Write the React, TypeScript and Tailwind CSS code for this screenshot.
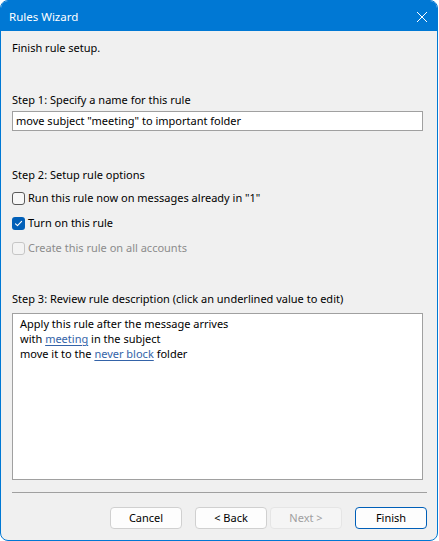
import React from "react";

const font = { fontFamily: '"Noto Sans", "Open Sans", sans-serif' };

function Check({ state }: { state: "off" | "on" | "disabled" }) {
  if (state === "on") {
    return (
      <span className="w-[13px] h-[13px] rounded-[3px] bg-[#005fb8] flex items-center justify-center shrink-0">
        <svg width="9" height="9" viewBox="0 0 9 9" fill="none">
          <path d="M1.5 4.8 L3.5 6.7 L7.6 2.3" stroke="white" strokeWidth="1.1" strokeLinecap="round" strokeLinejoin="round" />
        </svg>
      </span>
    );
  }
  return (
    <span
      className={
        "w-[13px] h-[13px] rounded-[3px] border shrink-0 " +
        (state === "off" ? "border-[#5a5a5a] bg-[#f7f7f7]" : "border-[#c6c6c6] bg-[#f3f3f3]")
      }
    />
  );
}

export default function App() {
  return (
    <div className="w-[439px] h-[541px] bg-white" style={font}>
      <div className="w-[438px] h-[541px] rounded-[8px] border border-[#0078d4] overflow-hidden bg-[#f0f0f0] flex flex-col text-[11px] text-black">
        <div className="h-[30px] bg-[#0078d4] flex items-center justify-between pl-[8px] pr-[9px] shrink-0">
          <span className="text-white text-[11.5px] leading-[16px] mt-[1px]">Rules Wizard</span>
          <svg width="12" height="12" viewBox="0 0 12 12" className="mt-[1px]">
            <path d="M1 1 L11 11 M11 1 L1 11" stroke="white" strokeWidth="1" />
          </svg>
        </div>
        <div className="flex flex-col px-[11px]">
          <div className="mt-[9px] leading-[16px]">Finish rule setup.</div>
          <div className="mt-[36px] leading-[16px]">Step 1: Specify a name for this rule</div>
          <div className="mt-[3px] h-[20px] w-[411px] bg-white border border-[#a0a0a0] flex items-center px-[3px] leading-[16px]">
            move subject "meeting" to important folder
          </div>
          <div className="mt-[36px] leading-[16px]">Step 2: Setup rule options</div>
          <div className="mt-[7px] flex flex-col gap-[9px]">
            <div className="flex items-center gap-[3px] h-[16px]">
              <Check state="off" />
              <span className="leading-[16px]">Run this rule now on messages already in "1"</span>
            </div>
            <div className="flex items-center gap-[3px] h-[16px]">
              <Check state="on" />
              <span className="leading-[16px]">Turn on this rule</span>
            </div>
            <div className="flex items-center gap-[3px] h-[16px]">
              <Check state="disabled" />
              <span className="leading-[16px] text-[#8c8c8c]">Create this rule on all accounts</span>
            </div>
          </div>
          <div className="mt-[35px] leading-[16px]">Step 3: Review rule description (click an underlined value to edit)</div>
          <div className="mt-[6px] h-[167px] w-[411px] bg-white border border-[#a0a0a0] pl-[7px] pt-[2px] leading-[15px]">
            <div>Apply this rule after the message arrives</div>
            <div>
              with <span className="text-[#3463a8] underline underline-offset-[2px]">meeting</span> in the subject
            </div>
            <div>
              move it to the <span className="text-[#3463a8] underline underline-offset-[2px]">never block</span> folder
            </div>
          </div>
          <div className="mt-[12px] h-px w-[415px] bg-[#a0a0a0]" />
          <div className="mt-[14px] flex items-center justify-end w-[415px]">
            <button className="w-[72px] h-[22px] rounded-[4px] border border-[#d0d0d0] bg-[#fdfdfd] leading-[16px]">Cancel</button>
            <button className="ml-[13px] w-[72px] h-[22px] rounded-[4px] border border-[#d0d0d0] bg-[#fdfdfd] leading-[16px]">&lt; Back</button>
            <button className="ml-[3px] w-[72px] h-[22px] rounded-[4px] border border-[#e5e5e5] bg-[#f5f5f5] text-[#a0a0a0] leading-[16px]">Next &gt;</button>
            <button className="ml-[13px] w-[72px] h-[22px] rounded-[4px] border border-[#005fb8] bg-[#fdfdfd] leading-[16px]">Finish</button>
          </div>
        </div>
      </div>
    </div>
  );
}
